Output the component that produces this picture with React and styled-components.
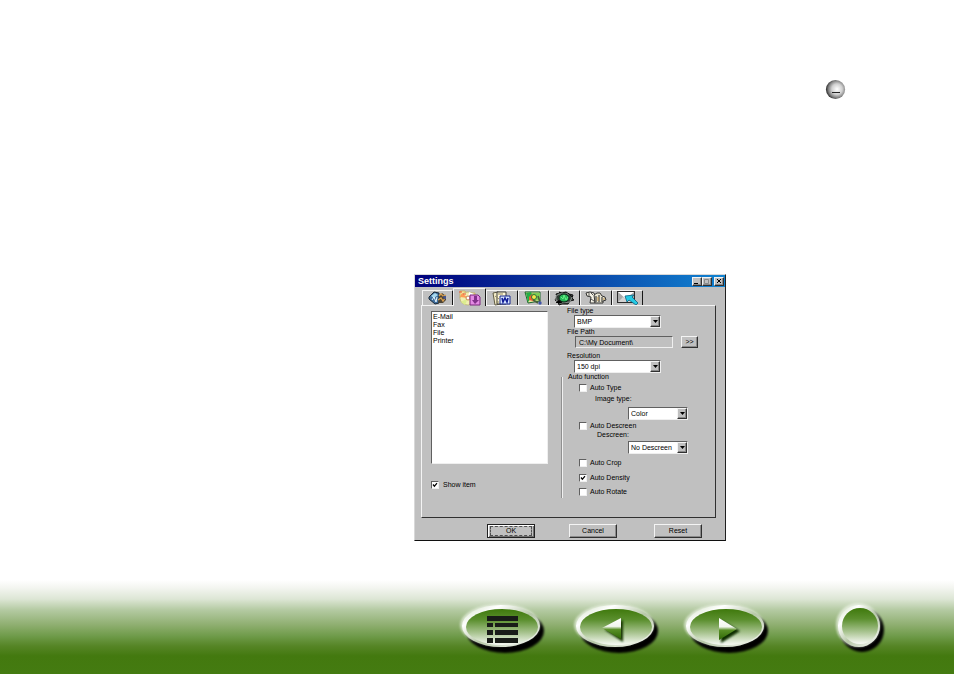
import React, { useState } from "react";
import styled, { createGlobalStyle, css } from "styled-components";

const GlobalStyle = createGlobalStyle`
  *, *::before, *::after { box-sizing: border-box; }
  body { margin: 0; background: #fff; }
  button, input, select { font: inherit; color: inherit; margin: 0; }
`;

const raised = css`
  border: 1px solid;
  border-color: #f4f4f4 #303030 #303030 #f4f4f4;
  box-shadow: inset -1px -1px 0 #8a8a8a;
  background: #c0c0c0;
`;

const sunken = css`
  border: 1px solid;
  border-color: #606060 #efefef #efefef #606060;
`;

const Page = styled.div`
  min-height: 100vh;
  display: flex;
  flex-direction: column;
  font: 7px/8px "Liberation Sans", Arial, sans-serif;
  color: #000;
`;

const Header = styled.header`
  display: flex;
  justify-content: flex-end;
  padding: 79px 108px 0 0;
`;

const RoundButton = styled.button`
  width: 21px;
  height: 21px;
  padding: 0;
  border: 0;
  background: none;
  svg { display: block; }
`;

const Main = styled.main`
  flex: 1;
  display: grid;
  grid-template-columns: 414fr 312px 228fr;
  align-items: start;
  padding-top: 174px;
`;

const Dialog = styled.section`
  grid-column: 2;
  background: #c0c0c0;
  border: 1px solid;
  border-color: #d8d8d8 #202020 #101010 #d8d8d8;
`;

const TitleBar = styled.div`
  display: flex;
  align-items: center;
  height: 12px;
  padding: 0 1px 0 3px;
  color: #fff;
  background: linear-gradient(90deg, #00007c, #0a3fa4 50%, #1184d2);
`;

const Title = styled.h1`
  flex: 1;
  margin: 0;
  font-size: 9px;
  line-height: 12px;
  font-weight: bold;
`;

const WindowButton = styled.button`
  ${raised}
  width: 10px;
  height: 9px;
  padding: 0;
  margin-left: ${(p) => (p.$apart ? "2px" : "0")};
  svg { display: block; }
`;

const Tabs = styled.div`
  display: flex;
  align-items: flex-end;
  height: 18px;
  padding: 0 82px 0 7px;
`;

const Tab = styled.button`
  flex: ${(p) => (p.$active ? "0 0 33px" : "1")};
  height: ${(p) => (p.$active ? "18px" : "15px")};
  margin-bottom: ${(p) => (p.$active ? "-1px" : "0")};
  padding: 0;
  display: flex;
  align-items: center;
  justify-content: center;
  position: relative;
  z-index: ${(p) => (p.$active ? 1 : 0)};
  background: #c0c0c0;
  border: 1px solid;
  border-width: 1px 1px 0;
  border-color: #f4f4f4 #181818 #f4f4f4 #f4f4f4;
  border-radius: 1px 1px 0 0;
  svg { flex: none; }
`;

const Panel = styled.div`
  display: flex;
  height: 213px;
  margin: 0 9px 0 6px;
  padding-left: 9px;
  border: 1px solid;
  border-color: #f4f4f4 #303030 #303030 #f4f4f4;
`;

const Items = styled.div`
  width: 131px;
  padding-top: 5px;
`;

const ListBox = styled.select`
  ${sunken}
  display: block;
  width: 117px;
  height: 153px;
  margin-bottom: 17px;
  padding: 1px 0;
  border-radius: 0;
  background: #fff;
  overflow: hidden;
  outline: 0;
  option {
    min-height: 8px;
    height: 8px;
    padding: 0 1px;
    font-size: 7px;
    line-height: 8px;
  }
`;

const Fields = styled.div`
  flex: 1;
  padding-top: 1px;
`;

const Label = styled.label`
  display: block;
  width: max-content;
  height: 8px;
  margin-top: ${(p) => p.$gap || 0}px;
  margin-left: ${(p) => p.$indent || 0}px;
  white-space: nowrap;
`;

const SelectBox = styled.div`
  ${sunken}
  display: flex;
  position: relative;
  width: ${(p) => (p.$narrow ? "60px" : "87px")};
  height: 13px;
  margin-top: ${(p) => p.$gap || 0}px;
  margin-left: ${(p) => p.$indent}px;
  background: #fff;
`;

const Select = styled.select`
  appearance: none;
  width: 100%;
  padding: 0 11px 0 2px;
  border: 0;
  border-radius: 0;
  background: transparent;
  line-height: 11px;
`;

const Arrow = styled.span`
  ${raised}
  position: absolute;
  top: 0;
  right: 0;
  width: 10px;
  height: 11px;
  display: grid;
  place-items: center;
  pointer-events: none;
`;

const PathRow = styled.div`
  display: flex;
  gap: 8px;
  margin-left: 13px;
`;

const PathInput = styled.input`
  ${sunken}
  width: 98px;
  height: 12px;
  padding: 0 3px;
  background: #c0c0c0;
  line-height: 10px;
`;

const PushButton = styled.button`
  ${raised}
  width: ${(p) => (p.$small ? "17px" : "48px")};
  height: ${(p) => (p.$small ? "12px" : "14px")};
  padding: 0;
  line-height: 8px;
  ${(p) =>
    p.$default &&
    css`
      border-color: #202020;
      box-shadow: inset 1px 1px 0 #fff, inset -1px -1px 0 #707070;
      span {
        display: block;
        margin: 0 2px;
        border: 1px dashed #505050;
      }
    `}
`;

const Group = styled.fieldset`
  height: 125px;
  min-width: 0;
  margin: 0;
  padding: 0;
  border: 0 solid #f0f0f0;
  border-left-width: 1px;
  box-shadow: -1px 0 0 #909090;
`;

const Legend = styled.legend`
  height: 8px;
  padding: 0 0 0 5px;
`;

const CheckLabel = styled.label`
  display: flex;
  align-items: center;
  gap: ${(p) => (p.$wide ? "4px" : "3px")};
  width: max-content;
  height: 8px;
  margin-top: ${(p) => p.$gap || 0}px;
  margin-left: ${(p) => p.$indent || 0}px;
`;

const CheckBox = styled.input`
  ${sunken}
  appearance: none;
  width: 8px;
  height: 8px;
  background: #fff;
  &:checked {
    background: #fff
      url("data:image/svg+xml,%3Csvg xmlns='http://www.w3.org/2000/svg' viewBox='0 0 6 6'%3E%3Cpath d='M1 2.5 2.4 4.2 5 1.2' fill='none' stroke='black' stroke-width='1.2'/%3E%3C/svg%3E");
  }
`;

const Actions = styled.div`
  display: flex;
  height: 22px;
  padding: 6px 23px 0 72px;
`;

const ActionSlot = styled.div`
  flex: ${(p) => p.$grow || "0"} 0 auto;
`;

const Footer = styled.footer`
  display: flex;
  justify-content: flex-end;
  height: 94px;
  padding: 20px 64px 0 0;
  background: linear-gradient(
    #ffffff 0px,
    #f3f5f0 8px,
    #dde6d5 19px,
    #b4caa2 30px,
    #91b073 44px,
    #6f9b4a 56px,
    #568526 66px,
    #43790f 76px,
    #447b11 100%
  );
`;

const NavButton = styled.button`
  width: ${(p) => (p.$round ? "56px" : "92px")};
  height: 60px;
  margin-right: ${(p) => p.$after || 0}px;
  padding: 0;
  border: 0;
  background: none;
  svg { display: block; overflow: visible; }
`;

const DropArrow = () => (
  <Arrow>
    <svg width="5" height="3" viewBox="0 0 5 3"><path d="M0 0h5L2.5 3z" /></svg>
  </Arrow>
);

function Choice({ id, options, narrow, gap, indent }) {
  return (
    <SelectBox $narrow={narrow} $gap={gap} $indent={indent}>
      <Select id={id}>
        {options.map((o) => <option key={o}>{o}</option>)}
      </Select>
      <DropArrow />
    </SelectBox>
  );
}

function Check({ children, checked, ...rest }) {
  return (
    <CheckLabel {...rest}>
      <CheckBox type="checkbox" defaultChecked={checked} />
      {children}
    </CheckLabel>
  );
}

const ToolsIcon = () => (
  <svg width="20" height="14" viewBox="0 0 20 14">
    <path d="M1 6 6 1l5 1v10l-4 1-6-5z" fill="#3f6d9c" stroke="#182838" />
    <path d="m3 5 4-3 3 2-4 3z" fill="#a7d8ef" />
    <path d="m4 9 2-3 2 5 1-5" fill="none" stroke="#e9f8ff" />
    <path d="m10 12 1-7 3-3 4 3v4l-3 3z" fill="#4c4435" />
    <path d="m11 5 2-2 2 2 3-1M10 9l3-2 2 3 2-3" fill="none" stroke="#d9a050" strokeWidth="1.3" />
    <path d="M15 5h3v3h-2z" fill="#46548a" />
  </svg>
);

const DiscIcon = () => (
  <svg width="23" height="16" viewBox="0 0 23 16">
    <path d="M2 1h5l1 2h9v5H2z" fill="#f2e9a0" stroke="#c4a54a" strokeWidth=".7" />
    <ellipse cx="10" cy="8.500" rx="8" ry="6.500" fill="#f0efb0" stroke="#b7b268" strokeWidth=".7" />
    <path d="M10 8 2 7l2-4z" fill="#ff9a55" />
    <path d="m10 8-7 4 4 3z" fill="#dcec8e" />
    <path d="m10 8 1-6 5 2z" fill="#fff" />
    <circle cx="10" cy="8" r="2" fill="#fff" stroke="#c98451" />
    <path d="M12 5h8l2 2v8H12z" fill="#e48be4" stroke="#7b267d" />
    <path d="M16 6h3v4h2l-4 4-3-4h2z" fill="#81318a" />
    <path d="M1 2h3M5 4h3" stroke="#f04e36" />
  </svg>
);

const WordIcon = () => (
  <svg width="19" height="15" viewBox="0 0 19 15">
    <path d="m1 2 5-1 3 2v10l-6 1z" fill="#f4edc9" stroke="#5f5a43" />
    <path d="M5 1h9v12H5z" fill="#fff8d5" stroke="#383838" />
    <path d="M6 3h5M3 5l4 3M4 11h3" stroke="#958b62" />
    <path d="M8 5h10v8H8z" fill="#d8e6ff" stroke="#15278d" />
    <path d="m10 7 1 4 2-4 2 4 1-4" fill="none" stroke="#101d99" strokeWidth="1.6" />
  </svg>
);

const PhotoIcon = () => (
  <svg width="19" height="15" viewBox="0 0 19 15">
    <path d="M1 1h15v9L4 12z" fill="#f1e79c" stroke="#1a672d" />
    <path d="m2 2 5-1 2 4-5 6z" fill="#24ad44" />
    <path d="M8 2h8v7l-6 1z" fill="#7dcd56" />
    <path d="m5 6 3-3 3 3-2 4-4-1z" fill="#ed5b31" />
    <circle cx="10" cy="6" r="2.500" fill="#f7e54b" stroke="#237838" />
    <path d="m9 9 5 3M14 5l2 6" stroke="#4a603c" strokeWidth="1.6" />
    <circle cx="16" cy="12" r="1.700" fill="#4054a8" />
  </svg>
);

const ChipIcon = () => (
  <svg width="21" height="15" viewBox="0 0 21 15">
    <path d="m5 1 3 1 4-1 3 2 4 1-1 3 2 2-4 1-2 3H8l-3 1-1-3-3-2 2-3-1-3 4-1z" fill="#3b443e" stroke="#111" />
    <path d="m2 5 3-2 10 0 3 3-2 5-10 1-4-3z" fill="none" stroke="#8c938f" />
    <ellipse cx="10" cy="7" rx="5" ry="4" fill="#27b456" stroke="#061d12" />
    <path d="m7 6 2 2 1-4 2 5 2-3" fill="none" stroke="#69f386" />
    <path d="m2 12 3-3 3 3M14 2l4 4" stroke="#121212" />
  </svg>
);

const CopyIcon = () => (
  <svg width="22" height="14" viewBox="0 0 22 14">
    <path d="m1 2 4-1 4 1 1 3v7H5l1-6-4-1z" fill="#f5f2e5" stroke="#333" />
    <path d="M4 2v3M6 2l2 2M6 8l3 2" stroke="#555" />
    <path d="m9 4 3-2h3l2 3 3 1 1 3-3 1v2h-8z" fill="#e8e4d1" stroke="#333" />
    <path d="M11 5v6M14 4v7M17 6v5" stroke="#222" />
    <path d="M12 7h2m-2 2h2m4-1h2" stroke="#bd9145" />
  </svg>
);

const MailIcon = () => (
  <svg width="21" height="14" viewBox="0 0 21 14">
    <path d="M0 0h18v12H0z" fill="#2c2c2c" />
    <path d="M1 1h16v10H1z" fill="#a9a9a9" />
    <path d="M1 1h16L9 8z" fill="#fff" />
    <path d="m1 11 5-5 3 2 8 3z" fill="#d4d4d4" />
    <path d="m8 5 9-1-2 2 6 6-2 2-7-5-2 2z" fill="#25cbe4" stroke="#0a5f80" strokeWidth=".8" />
  </svg>
);

const tabs = [
  ["General", ToolsIcon],
  ["Scan", DiscIcon],
  ["OCR", WordIcon],
  ["Image", PhotoIcon],
  ["Device", ChipIcon],
  ["Copy", CopyIcon],
  ["E-Mail", MailIcon],
];

const NavDefs = () => (
  <defs>
    <linearGradient id="rim" x1="0" y1="0" x2="1" y2="1">
      <stop offset="0" stopColor="#c8dbb8" />
      <stop offset=".25" stopColor="#fff" />
      <stop offset=".55" stopColor="#b7c8a8" />
      <stop offset="1" stopColor="#fff" />
    </linearGradient>
    <linearGradient id="face" x1="0" y1="0" x2="0" y2="1">
      <stop offset="0" stopColor="#3f790c" />
      <stop offset=".3" stopColor="#5b8f2e" />
      <stop offset=".65" stopColor="#a6c28d" />
      <stop offset="1" stopColor="#f8faf6" />
    </linearGradient>
    <linearGradient id="arrow" x1="0" y1="0" x2="0" y2="1">
      <stop offset="0" stopColor="#fff" />
      <stop offset=".4" stopColor="#f2f6ee" />
      <stop offset=".55" stopColor="#599027" />
      <stop offset="1" stopColor="#2f6705" />
    </linearGradient>
    <filter id="soft" x="-20%" y="-20%" width="140%" height="140%">
      <feGaussianBlur stdDeviation="1" />
    </filter>
  </defs>
);

function Oval({ label, after, children }) {
  return (
    <NavButton aria-label={label} $after={after}>
      <svg width="92" height="60" viewBox="0 0 92 60">
        <NavDefs />
        <ellipse cx="47" cy="31" rx="39" ry="22" fill="#000" filter="url(#soft)" />
        <ellipse cx="42" cy="25" rx="40" ry="21" fill="#eef4e8" opacity=".7" filter="url(#soft)" />
        <ellipse cx="43" cy="26" rx="39" ry="21" fill="url(#rim)" />
        <ellipse cx="44" cy="27" rx="36" ry="18" fill="url(#face)" />
        {children}
      </svg>
    </NavButton>
  );
}

export default function App() {
  const [active, setActive] = useState(1);
  return (
    <Page>
      <GlobalStyle />
      <Header>
        <RoundButton aria-label="Collapse">
          <svg width="21" height="21" viewBox="0 0 21 21">
            <defs>
              <radialGradient id="ball" cx=".58" cy=".48" r=".55">
                <stop offset="0" stopColor="#fff" />
                <stop offset=".5" stopColor="#d0d0d0" />
                <stop offset=".8" stopColor="#858585" />
                <stop offset="1" stopColor="#3c3c3c" />
              </radialGradient>
            </defs>
            <circle cx="10.500" cy="10.500" r="9.600" fill="url(#ball)" />
            <path d="M7 13.500h8" stroke="#222" />
          </svg>
        </RoundButton>
      </Header>
      <Main>
        <Dialog aria-label="Settings">
          <TitleBar>
            <Title>Settings</Title>
            <WindowButton aria-label="Minimize">
              <svg width="8" height="7"><path d="M1 5.500h4" stroke="#000" /></svg>
            </WindowButton>
            <WindowButton aria-label="Maximize">
              <svg width="8" height="7"><path d="M1.500 1.500h4v4h-4z" fill="none" stroke="#888" /></svg>
            </WindowButton>
            <WindowButton aria-label="Close" $apart>
              <svg width="8" height="7"><path d="m2 1 4 4m0-4L2 5" stroke="#000" /></svg>
            </WindowButton>
          </TitleBar>
          <Tabs role="tablist">
            {tabs.map(([name, Icon], i) => (
              <Tab key={name} role="tab" aria-label={name} aria-selected={i === active} $active={i === active} onClick={() => setActive(i)}>
                <Icon />
              </Tab>
            ))}
          </Tabs>
          <Panel role="tabpanel">
            <Items>
              <ListBox size="18" aria-label="Items">
                <option>E-Mail</option>
                <option>Fax</option>
                <option>File</option>
                <option>Printer</option>
              </ListBox>
              <Check checked $wide>Show item</Check>
            </Items>
            <Fields>
              <Label htmlFor="type" $indent={5}>File type</Label>
              <Choice id="type" indent={12} options={["BMP", "JPEG", "TIFF"]} />
              <Label htmlFor="path" $indent={5}>File Path</Label>
              <PathRow>
                <PathInput id="path" readOnly value={"C:\\My Document\\"} />
                <PushButton $small>&gt;&gt;</PushButton>
              </PathRow>
              <Label htmlFor="res" $gap={4} $indent={5}>Resolution</Label>
              <Choice id="res" indent={12} options={["150 dpi", "300 dpi"]} />
              <Group>
                <Legend>Auto function</Legend>
                <Check $gap={3} $indent={16}>Auto Type</Check>
                <Label htmlFor="image" $gap={3} $indent={32}>Image type:</Label>
                <Choice id="image" narrow gap={4} indent={65} options={["Color", "Gray"]} />
                <Check $gap={2} $indent={16}>Auto Descreen</Check>
                <Label htmlFor="descreen" $gap={1} $indent={34}>Descreen:</Label>
                <Choice id="descreen" narrow gap={2} indent={65} options={["No Descreen"]} />
                <Check $gap={5} $indent={16}>Auto Crop</Check>
                <Check $gap={7} $indent={16} checked>Auto Density</Check>
                <Check $gap={6} $indent={16}>Auto Rotate</Check>
              </Group>
            </Fields>
          </Panel>
          <Actions>
            <ActionSlot $grow="34"><PushButton $default><span>OK</span></PushButton></ActionSlot>
            <ActionSlot $grow="37"><PushButton>Cancel</PushButton></ActionSlot>
            <ActionSlot><PushButton>Reset</PushButton></ActionSlot>
          </Actions>
        </Dialog>
      </Main>
      <Footer>
        <Oval label="Contents" after={22}>
          <path d="M29 16h31v5H29zM29 23h6v4h-6zM37 23h23v4H37zM29 30h6v5h-6zM37 30h23v5H37zM29 38h6v5h-6zM37 38h23v5H37z" fill="#191c18" />
        </Oval>
        <Oval label="Previous page" after={18}>
          <path d="M33 30 51 20v22z" fill="#173606" filter="url(#soft)" />
          <path d="M30 28 49 18v21z" fill="url(#arrow)" />
        </Oval>
        <Oval label="Next page" after={60}>
          <path d="M39 20v23l19-12z" fill="#102e04" filter="url(#soft)" />
          <path d="M37 18v22l18-11z" fill="url(#arrow)" />
        </Oval>
        <NavButton aria-label="Exit" $round>
          <svg width="56" height="60" viewBox="0 0 56 60">
            <circle cx="28" cy="30" r="22" fill="#000" filter="url(#soft)" />
            <circle cx="24" cy="25" r="22" fill="#f1f6ec" opacity=".7" filter="url(#soft)" />
            <circle cx="25" cy="26" r="21" fill="url(#rim)" />
            <circle cx="26" cy="26" r="18" fill="url(#face)" />
          </svg>
        </NavButton>
      </Footer>
    </Page>
  );
}
